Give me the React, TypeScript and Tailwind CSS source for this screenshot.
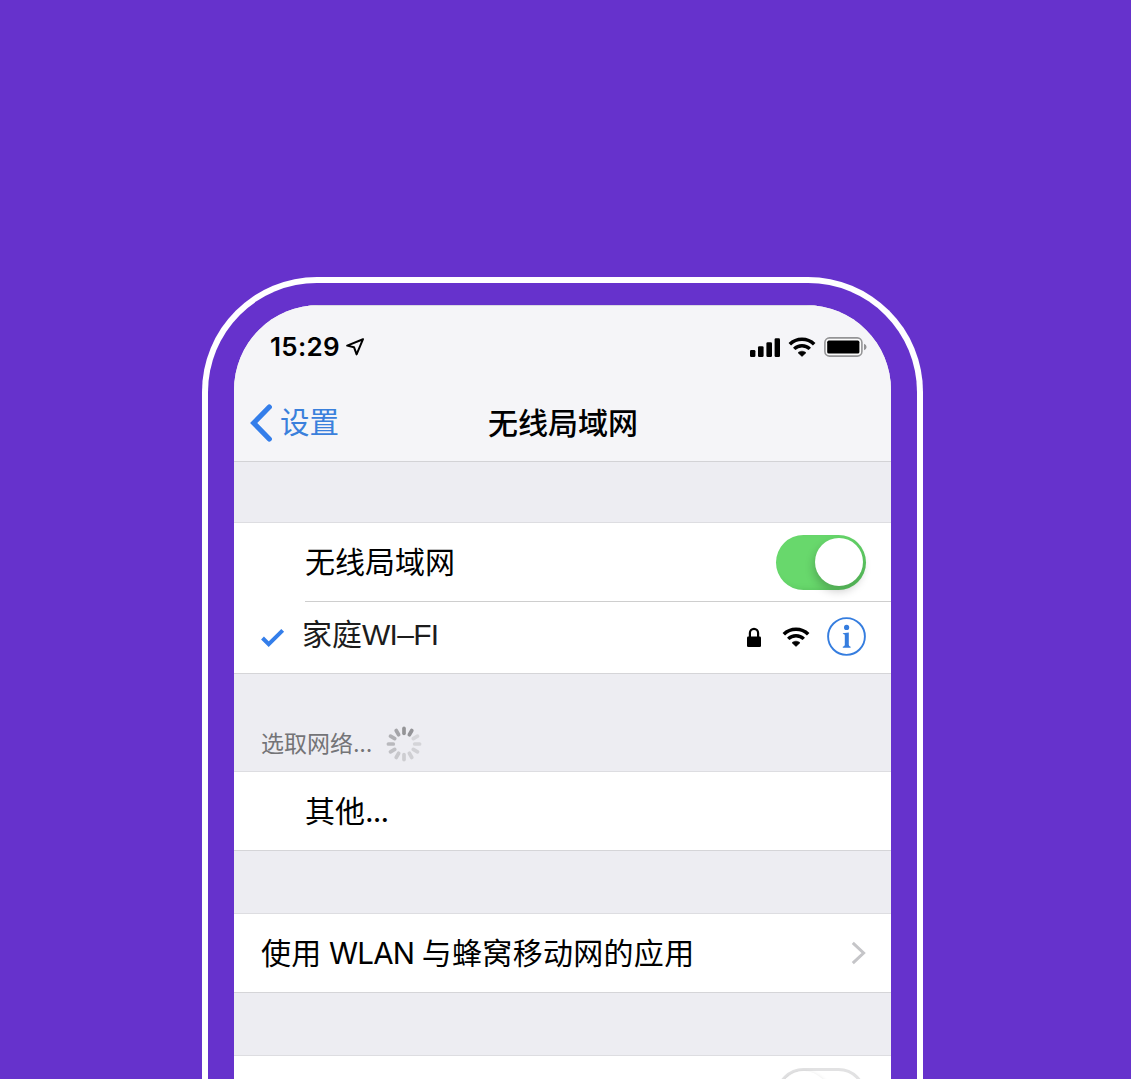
import React from "react";

const CJK = "font-['Inter','Noto_Sans_CJK_SC',sans-serif]";

function WifiIcon({ className }: { className?: string }) {
  return (
    <svg viewBox="0 0 28 20" className={className} fill="none" stroke="#000">
      <path d="M1.8 7.2A17.4 17.4 0 0 1 26.2 7.2" strokeWidth="3.6" />
      <path d="M6.2 11.9A11.2 11.2 0 0 1 21.8 11.9" strokeWidth="3.4" />
      <path d="M14 19.4L10 15.7A6 6 0 0 1 18 15.7Z" fill="#000" strokeWidth="0.6" strokeLinejoin="round" />
    </svg>
  );
}

function SignalIcon() {
  return (
    <svg viewBox="0 0 30 19" className="h-[19px] w-[30px]">
      <rect x="0" y="12" width="5.4" height="7" rx="1.3" />
      <rect x="8" y="8.3" width="5.6" height="10.7" rx="1.3" />
      <rect x="16.4" y="4.3" width="5.6" height="14.7" rx="1.3" />
      <rect x="24.6" y="0.2" width="5.4" height="18.8" rx="1.3" />
    </svg>
  );
}

function BatteryIcon() {
  return (
    <svg viewBox="0 0 43 20" className="h-5 w-[43px]">
      <rect x="0.9" y="0.9" width="37" height="18.2" rx="4.6" fill="#fafafa" stroke="#949496" strokeWidth="1.6" />
      <rect x="3.2" y="3.6" width="32.2" height="13" rx="1.6" />
      <path d="M40 6.8Q42.6 7.6 42.6 10T40 13.2Z" fill="#929294" />
    </svg>
  );
}

const SPOKES = ["#949497", "#949498", "#d6d6da", "#d4d4d8", "#d1d1d5", "#cfcfd3", "#cdcdd1", "#c8c8cc", "#c1c1c5", "#b9b9bd", "#b0b0b4", "#a5a5a9"];

function Spinner() {
  return (
    <svg viewBox="-18 -18 36 36" className="h-9 w-9">
      {SPOKES.map((c, i) => (
        <line key={i} x1="0" y1="-15.6" x2="0" y2="-10.7" stroke={c} strokeWidth="3.7" strokeLinecap="round" transform={`rotate(${i * 30})`} />
      ))}
    </svg>
  );
}

function LockIcon() {
  return (
    <svg viewBox="0 0 14 20" className="h-5 w-[14px]">
      <path d="M2.9 11V5.9a4.1 4.1 0 0 1 8.2 0V11" fill="none" stroke="#000" strokeWidth="2.2" />
      <rect x="0" y="9.4" width="14" height="10.6" rx="1.3" />
    </svg>
  );
}

function InfoIcon() {
  return (
    <svg viewBox="0 0 40 40" className="h-10 w-10">
      <circle cx="19.5" cy="19.5" r="18.4" fill="none" stroke="#357ddf" strokeWidth="1.9" />
      <circle cx="19.6" cy="10.4" r="2.6" fill="#357ddf" />
      <path d="M15.9 16.2L21.8 15.5V27.8Q21.8 29.4 23.6 29.7V30.7H15.8V29.7Q17.8 29.4 17.8 27.8V18.3Q17.8 17.1 15.9 17.1Z" fill="#357ddf" />
    </svg>
  );
}

export default function App() {
  return (
    <div className={`h-[1079px] overflow-hidden bg-[#6632cc] pl-[202px] pt-[277px] text-[30px] leading-none text-black ${CJK}`}>
      <div className="h-[1000px] w-[721px] rounded-t-[115px] border-[6px] border-b-0 border-white px-[26px] pt-[22px]">
        <div className="flex h-[900px] w-[657px] flex-col overflow-hidden rounded-t-[85px] bg-[#ededf2]">
          <header className="h-[157px] shrink-0 border-b border-t border-b-[#d3d3d6] border-t-[#d9d7e2] bg-[#f5f5f8]">
            <div className="flex h-[82px] items-center pl-9 pr-6">
              <span className="w-[71px] whitespace-nowrap text-[26px] font-semibold tracking-[0.3px]">15:29</span>
              <svg viewBox="0 0 18 18" className="ml-[5px] h-[18px] w-[18px]" fill="none" stroke="#000" strokeWidth="2" strokeLinejoin="round">
                <path d="M17 1.2L1.2 7.6L8 9.2L10.6 16.4Z" />
              </svg>
              <div className="ml-auto flex items-center">
                <SignalIcon />
                <WifiIcon className="ml-[8px] h-5 w-7" />
                <span className="ml-[8px]"><BatteryIcon /></span>
              </div>
            </div>
            <div className="grid h-[70px] grid-cols-[254px_1fr] items-center">
              <div className="flex items-center pl-4 text-[#3a80dc]">
                <svg viewBox="0 0 22 38" className="h-[38px] w-[22px]" fill="none" stroke="#347eea" strokeWidth="5.2" strokeLinecap="round" strokeLinejoin="miter">
                  <path d="M19.3 3L3.7 19L19.3 35" />
                </svg>
                <span className="ml-[8px] text-[29.5px]">设置</span>
              </div>
              <h1 className="font-medium">无线局域网</h1>
            </div>
          </header>

          <div className="h-[60px] shrink-0" />

          <section className="h-[152px] shrink-0 border-b border-t border-b-[#d5d5d8] border-t-[#dddde1] bg-white">
            <div className="ml-[71px] flex h-[79px] items-center border-b border-[#cecece] pr-[25px]">
              <span>无线局域网</span>
              <div className="ml-auto flex h-[55px] w-[90px] items-center justify-end rounded-full bg-[#68d86c] pr-[3px] shadow-[inset_-4px_-2px_6px_-2px_rgba(25,110,30,0.22)]">
                <div className="h-12 w-12 rounded-full bg-white shadow-[-1px_5px_10px_rgba(0,0,0,0.22)]" />
              </div>
            </div>
            <div className="flex h-[71px] items-center pl-[27px] pr-6">
              <svg viewBox="0 0 24 20" className="h-5 w-6" fill="none" stroke="#347eea" strokeWidth="4">
                <path d="M1.5 10L7.7 16.2L21.7 2.4" />
              </svg>
              <span className="mb-[7px] ml-[17px] whitespace-nowrap text-[#1c1c1c]">家庭<span className="font-['Liberation_Sans'] text-[30px] tracking-[-0.7px]">WI–FI</span></span>
              <div className="mb-[2px] ml-auto flex items-center">
                <LockIcon />
                <WifiIcon className="ml-[21px] h-[22px] w-7" />
                <span className="ml-[17px]"><InfoIcon /></span>
              </div>
            </div>
          </section>

          <div className="flex h-[97px] shrink-0 items-end pb-[9px] pl-[27px] text-[23px] text-[#747477]">
            <span className="mb-[6px] w-[125px] whitespace-nowrap">选取网络<span className="tracking-[-0.3px]">...</span></span>
            <Spinner />
          </div>

          <section className="flex h-[80px] shrink-0 items-center border-b border-t border-b-[#d5d5d8] border-t-[#dddde1] bg-white pl-[71px]">
            其他<span className="tracking-[-0.9px]">...</span>
          </section>

          <div className="h-[62px] shrink-0" />

          <section className="flex h-[80px] shrink-0 items-center border-b border-t border-b-[#d5d5d8] border-t-[#dddde1] bg-white pl-[27px] pr-[25px]">
            <span className="whitespace-nowrap tracking-[0.3px]">使用<span className="text-[29.5px] tracking-[-0.8px]"> WLAN </span>与蜂窝移动网的应用</span>
            <svg viewBox="0 0 15 24" className="ml-auto h-6 w-[15px]" fill="none" stroke="#c5c5c8" strokeWidth="3">
              <path d="M1.8 1.8L12.6 12L1.8 22.2" />
            </svg>
          </section>

          <div className="h-[62px] shrink-0" />

          <section className="flex h-[80px] shrink-0 justify-end border-t border-t-[#dddde1] bg-white pr-[25px] pt-[12px]">
            <div className="h-[55px] w-[90px] rounded-full border-[3px] border-[#e2e2e3]">
              <div className="h-[50px] w-[50px] rounded-full bg-white shadow-[0_2px_5px_rgba(0,0,0,0.18)]" />
            </div>
          </section>
        </div>
      </div>
    </div>
  );
}
